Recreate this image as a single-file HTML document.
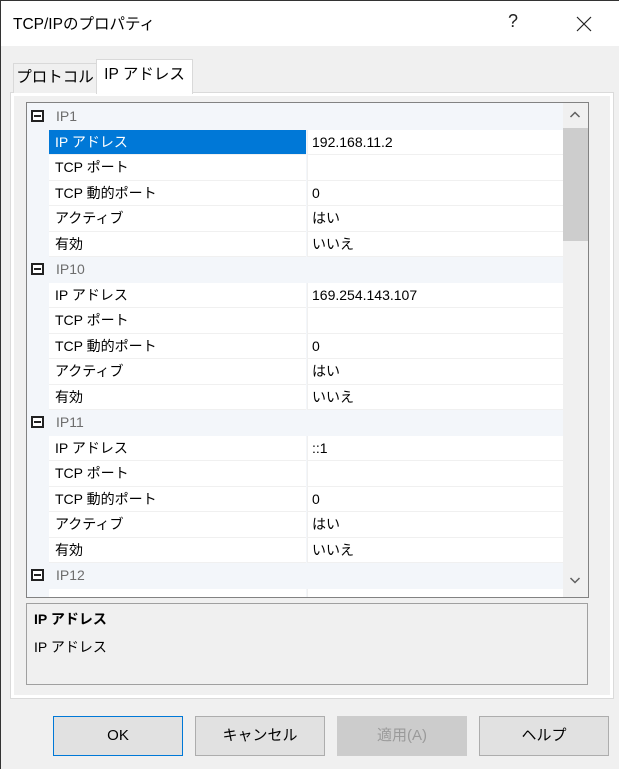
<!DOCTYPE html>
<html><head><meta charset="utf-8"><style>
*{margin:0;padding:0;box-sizing:border-box}
body{width:619px;height:769px;background:#f0f0f0;font-family:"Liberation Sans","Noto Sans CJK JP",sans-serif;font-size:14px;color:#000;position:relative;overflow:hidden}
.abs{position:absolute}
.title{left:0;top:0;width:619px;height:46px;background:#fff}
.tab{border:1px solid #d9d9d9;border-bottom:none;font-size:15.5px;line-height:28px;text-align:center}
.row{position:absolute;left:0;width:536px;height:25.5px;line-height:25.5px}
.cat{background:#f3f6fa;color:#6d6d6d}
.n{position:absolute;left:22px;width:257px;height:100%;padding-left:6px;background:#fff;border-bottom:1px solid #f0f0f0}
.v{position:absolute;left:280px;width:256px;height:100%;padding-left:4px;background:#fff;border-bottom:1px solid #f0f0f0;border-left:1px solid #f0f0f0}
.sel{background:#0078d7;color:#fff}
.mb{position:absolute;left:4px;top:6px;width:13px;height:12px;border:2px solid #222;background:#fff}
.mb:after{content:"";position:absolute;left:1px;right:1px;top:3px;height:2px;background:#222}
.btn{top:716px;width:130px;height:40px;background:#e1e1e1;border:1px solid #adadad;text-align:center;line-height:38px;font-size:15px}
</style></head><body>
<div class="abs title"></div>
<div class="abs" style="left:0;top:0;width:619px;height:1px;background:#333"></div>
<div class="abs" style="left:0;top:0;width:1px;height:769px;background:#333"></div>
<div class="abs" style="left:13px;top:12px;font-size:15.5px">TCP/IPのプロパティ</div>
<div class="abs" style="left:508px;top:11px;font-size:18px;color:#222">?</div>
<svg class="abs" style="left:576px;top:16px" width="16" height="16"><path d="M1 1L15 15M15 1L1 15" stroke="#222" stroke-width="1.2"/></svg>

<div class="abs" style="left:10px;top:92px;width:604px;height:607px;border:1px solid #dadada;background:#fff"></div>
<div class="abs" style="left:14px;top:96px;width:596px;height:599px;background:#f0f0f0"></div>
<div class="abs tab" style="left:13px;top:63px;width:84px;height:30px;background:#f0f0f0">プロトコル</div>
<div class="abs tab" style="left:96px;top:59px;width:97px;height:35px;background:#fff;line-height:30px">IP アドレス</div>

<div class="abs" style="left:26px;top:102px;width:563px;height:496px;border:1px solid #828282;background:#f3f6fa;overflow:hidden">
<div style="position:absolute;left:0;top:1.25px;width:536px">
<div class="row cat" style="top:0"><div class="mb"></div><span style="position:absolute;left:29px">IP1</span></div>
<div class="row" style="top:25.5px"><div class="n sel">IP アドレス</div><div class="v">192.168.11.2</div></div>
<div class="row" style="top:51px"><div class="n">TCP ポート</div><div class="v"></div></div>
<div class="row" style="top:76.5px"><div class="n">TCP 動的ポート</div><div class="v">0</div></div>
<div class="row" style="top:102px"><div class="n">アクティブ</div><div class="v">はい</div></div>
<div class="row" style="top:127.5px"><div class="n">有効</div><div class="v">いいえ</div></div>
<div class="row cat" style="top:153px"><div class="mb"></div><span style="position:absolute;left:29px">IP10</span></div>
<div class="row" style="top:178.5px"><div class="n">IP アドレス</div><div class="v">169.254.143.107</div></div>
<div class="row" style="top:204px"><div class="n">TCP ポート</div><div class="v"></div></div>
<div class="row" style="top:229.5px"><div class="n">TCP 動的ポート</div><div class="v">0</div></div>
<div class="row" style="top:255px"><div class="n">アクティブ</div><div class="v">はい</div></div>
<div class="row" style="top:280.5px"><div class="n">有効</div><div class="v">いいえ</div></div>
<div class="row cat" style="top:306px"><div class="mb"></div><span style="position:absolute;left:29px">IP11</span></div>
<div class="row" style="top:331.5px"><div class="n">IP アドレス</div><div class="v">::1</div></div>
<div class="row" style="top:357px"><div class="n">TCP ポート</div><div class="v"></div></div>
<div class="row" style="top:382.5px"><div class="n">TCP 動的ポート</div><div class="v">0</div></div>
<div class="row" style="top:408px"><div class="n">アクティブ</div><div class="v">はい</div></div>
<div class="row" style="top:433.5px"><div class="n">有効</div><div class="v">いいえ</div></div>
<div class="row cat" style="top:459px"><div class="mb"></div><span style="position:absolute;left:29px">IP12</span></div>
<div class="row" style="top:484.5px"><div class="n"></div><div class="v"></div></div>
</div>
<div style="position:absolute;left:536px;top:0;width:25px;height:494px;background:#f0f0f0"></div>
<div style="position:absolute;left:536px;top:25px;width:25px;height:113px;background:#cdcdcd"></div>
<svg style="position:absolute;left:542px;top:8px" width="12" height="8"><path d="M1.5 6L6 1.5L10.5 6" stroke="#606060" stroke-width="1.5" fill="none"/></svg>
<svg style="position:absolute;left:542px;top:473px" width="12" height="8"><path d="M1.5 2L6 6.5L10.5 2" stroke="#606060" stroke-width="1.5" fill="none"/></svg>
</div>

<div class="abs" style="left:26px;top:603px;width:562px;height:82px;border:1px solid #a0a0a0;background:#f0f0f0"></div>
<div class="abs" style="left:34px;top:609px;font-weight:bold">IP アドレス</div>
<div class="abs" style="left:34px;top:637px">IP アドレス</div>

<div class="abs btn" style="left:53px;border-color:#0078d7">OK</div>
<div class="abs btn" style="left:195px">キャンセル</div>
<div class="abs btn" style="left:337px;background:#cccccc;border-color:#cccccc;color:#9a9a9a">適用(A)</div>
<div class="abs btn" style="left:479px">ヘルプ</div>
</body></html>
